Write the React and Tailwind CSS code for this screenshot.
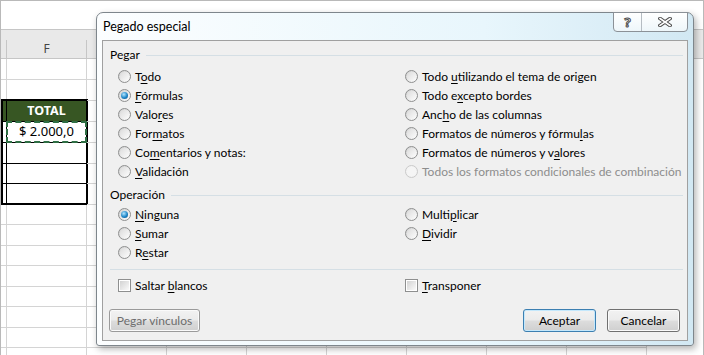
import React from "react";

const Ul = ({ children }) => (
  <span className="underline decoration-1 underline-offset-[2px]">{children}</span>
);

const Radio = ({ checked, disabled }) => (
  <span
    className={`flex h-[13px] w-[13px] shrink-0 items-center justify-center rounded-full border ${
      disabled
        ? "border-[#cacaca] bg-[#f3f3f3]"
        : "border-[#8e8f8f] bg-[linear-gradient(135deg,#cfcfcf,#ffffff)]"
    }`}
  >
    {checked ? (
      <span className="h-[7px] w-[7px] rounded-full bg-[radial-gradient(circle_at_40%_35%,#b4e6ff,#1d86c8_55%,#0a4780)]" />
    ) : (
      <span
        className={`h-[9px] w-[9px] rounded-full ${
          disabled ? "bg-[#f5f5f5]" : "bg-[linear-gradient(135deg,#dcdcdc,#fbfbfb)]"
        }`}
      />
    )}
  </span>
);

const Option = ({ children, checked, disabled }) => (
  <div className={`flex h-[19px] items-center gap-[4px] ${disabled ? "text-[#8d8d8d]" : "text-black"}`}>
    <Radio checked={checked} disabled={disabled} />
    <span className="whitespace-nowrap">{children}</span>
  </div>
);

const Check = ({ children }) => (
  <div className="flex h-[19px] items-center gap-[4px]">
    <span className="flex h-[13px] w-[13px] shrink-0 items-center justify-center border border-[#8e8f8f] bg-white">
      <span className="h-[9px] w-[9px] bg-[linear-gradient(135deg,#d2d2d2,#fafafa)]" />
    </span>
    <span className="whitespace-nowrap">{children}</span>
  </div>
);

const GroupLabel = ({ children }) => (
  <div className="flex h-[14px] items-center">
    <span>{children}</span>
    <span className="ml-[6px] h-px flex-1 bg-[#d5dfe5]" />
  </div>
);

const Btn = ({ children, primary, disabled, className }) => (
  <div
    className={`flex h-[23px] items-center justify-center rounded-[3px] border bg-[linear-gradient(#f2f2f2_0%,#ebebeb_48%,#dddddd_52%,#cfcfcf_100%)] ${
      primary
        ? "border-[#3c7fb1] shadow-[inset_0_0_0_1px_#c4e8fc]"
        : disabled
        ? "border-[#9a9a9a] shadow-[inset_0_0_0_1px_#fafafa] text-[#6d6d6d]"
        : "border-[#707070] shadow-[inset_0_0_0_1px_#fafafa]"
    } ${className}`}
  >
    {children}
  </div>
);

const rightCols = ["G", "H", "I", "J", "K", "L", "M"];
const gridRows = [21, 21, 21, 21, 21, 20, 21, 20, 21, 20, 21, 20, 21, 20, 21];
const lowerRows = [20, 21, 20, 21, 20, 21, 20, 21, 20];

const Sheet = () => (
  <div className="flex h-full w-full flex-col border-l border-t border-r border-[#b9b9b9] bg-white text-[#444] [font-family:'Noto_Sans',sans-serif]">
    <div className="h-[28px] shrink-0" />
    <div className="flex h-[30px] shrink-0 flex-col border-y border-[#c6c6c6] bg-[#e9e9e9]">
      <div className="h-[10px]" />
      <div className="flex flex-1">
        <div className="w-[6px] shrink-0 border-r border-[#c6c6c6]" />
        <div className="flex w-[80px] shrink-0 items-center justify-center border-r border-[#c6c6c6] text-[12px]">F</div>
        {rightCols.map((c) => (
          <div key={c} className="w-[80px] shrink-0 border-r border-[#c6c6c6]" />
        ))}
      </div>
    </div>
    <div className="flex">
      <div className="flex w-[86px] shrink-0 flex-col">
        <div className="flex h-[21px]">
          <div className="w-[6px] border-r border-b border-[#d4d4d4]" />
          <div className="w-[80px] border-r border-b border-[#d4d4d4]" />
        </div>
        <div className="flex h-[19px]">
          <div className="w-[6px] border-r border-[#d4d4d4]" />
          <div className="w-[80px] border-r border-[#d4d4d4]" />
        </div>
        <div className="w-[87px] border-2 border-black">
          <div className="flex h-[21px] border-b border-black bg-[#375623]">
            <div className="w-[4px] border-r border-black" />
            <div className="flex flex-1 items-center justify-center text-[12.5px] font-bold text-white">TOTAL</div>
          </div>
          <div className="flex h-[21px] border-b border-black">
            <div className="w-[4px] border-r border-black" />
            <div className="relative flex flex-1 items-center justify-center text-[13px] text-black">
              $ 2.000,0
              <span className="absolute -inset-[1px] border-2 border-dashed border-[#2f6f44]" />
            </div>
          </div>
          {[21, 20, 19].map((h, i) => (
            <div key={i} className={`flex ${i < 2 ? "border-b border-black" : ""}`} style={{ height: h }}>
              <div className="w-[4px] border-r border-black" />
              <div className="flex-1" />
            </div>
          ))}
        </div>
        {lowerRows.map((h, i) => (
          <div key={i} className="flex" style={{ height: h }}>
            <div className="w-[6px] border-r border-b border-[#d4d4d4]" />
            <div className="w-[80px] border-r border-b border-[#d4d4d4]" />
          </div>
        ))}
      </div>
      <div className="flex flex-col">
        {gridRows.map((h, i) => (
          <div key={i} className="flex" style={{ height: h }}>
            {rightCols.map((c) => (
              <div key={c} className="w-[80px] shrink-0 border-r border-b border-[#d4d4d4]" />
            ))}
          </div>
        ))}
      </div>
    </div>
  </div>
);

const Dialog = () => (
  <div className="absolute left-[96px] top-[12px] flex h-[334px] w-[598px] flex-col rounded-t-[7px] rounded-b-[3px] border border-[#7e868c] bg-[linear-gradient(to_right,#fcfeff,#e8f6fc_65%,#d2e8f3)] [font-family:Lato,sans-serif] shadow-[2px_3px_7px_rgba(0,0,0,0.3)]">
    <div className="relative flex h-[27px] shrink-0 items-center pl-[6px] pt-[1px] text-[12.5px] text-black">
      Pegado especial
      <div className="absolute -top-px right-[5px] flex h-[20px] w-[75px] rounded-b-[4px] border border-[#8b9197] bg-[linear-gradient(#ffffff,#eef6fa)]">
        <div className="flex w-[28px] items-center justify-center border-r border-[#b5bcc2] [font-family:'Noto_Sans',sans-serif] text-[13px] font-bold leading-none text-white [-webkit-text-stroke:1px_#4d4d4d]">
          ?
        </div>
        <div className="flex flex-1 items-center justify-center">
          <svg width="14" height="10" viewBox="0 0 14 10">
            <path d="M2 1.5 L12 8.5 M12 1.5 L2 8.5" stroke="#4d4d4d" strokeWidth="3.6" strokeLinecap="square" />
            <path d="M2 1.5 L12 8.5 M12 1.5 L2 8.5" stroke="#ffffff" strokeWidth="1.6" strokeLinecap="square" />
          </svg>
        </div>
      </div>
    </div>
    <div className="mx-[5px] mb-[4px] flex flex-1 flex-col border border-[#a0a0a0] bg-[#f0f0f0] pl-[7px] pr-[4px] pt-[7px] text-[12px] leading-[14px] text-black">
      <GroupLabel>Pegar</GroupLabel>
      <div className="mt-[5px] grid grid-cols-[287px_1fr] pl-[8px]">
        <div className="flex flex-col">
          <Option>T<Ul>o</Ul>do</Option>
          <Option checked><Ul>F</Ul>órmulas</Option>
          <Option>Valo<Ul>r</Ul>es</Option>
          <Option>For<Ul>m</Ul>atos</Option>
          <Option>Co<Ul>m</Ul>entarios y notas:</Option>
          <Option><Ul>V</Ul>alidación</Option>
        </div>
        <div className="flex flex-col">
          <Option>Todo <Ul>u</Ul>tilizando el tema de origen</Option>
          <Option>Todo e<Ul>x</Ul>cepto bordes</Option>
          <Option>Anc<Ul>h</Ul>o de las columnas</Option>
          <Option>Formatos de números y fórmu<Ul>l</Ul>as</Option>
          <Option>Formatos de números y v<Ul>a</Ul>lores</Option>
          <Option disabled>Todos los formatos condicionales de combinación</Option>
        </div>
      </div>
      <div className="mt-[7px]">
        <GroupLabel>Operación</GroupLabel>
      </div>
      <div className="mt-[3px] grid grid-cols-[287px_1fr] pl-[8px]">
        <div className="flex flex-col">
          <Option checked><Ul>N</Ul>inguna</Option>
          <Option><Ul>S</Ul>umar</Option>
          <Option>R<Ul>e</Ul>star</Option>
        </div>
        <div className="flex flex-col">
          <Option>Multi<Ul>p</Ul>licar</Option>
          <Option><Ul>D</Ul>ividir</Option>
        </div>
      </div>
      <div className="mt-[7px] h-px bg-[#d5dfe5]" />
      <div className="mt-[6px] grid grid-cols-[287px_1fr] pl-[8px]">
        <Check>Saltar <Ul>b</Ul>lancos</Check>
        <Check><Ul>T</Ul>ransponer</Check>
      </div>
      <div className="mt-[14px] flex items-center">
        <Btn disabled className="-ml-px w-[91px]">Pegar vínculos</Btn>
        <div className="flex-1" />
        <Btn primary className="w-[73px]">Aceptar</Btn>
        <Btn className="ml-[11px] mr-[3px] w-[73px]">Cancelar</Btn>
      </div>
    </div>
  </div>
);

export default function App() {
  return (
    <div className="relative h-[355px] w-[704px] overflow-hidden">
      <Sheet />
      <Dialog />
    </div>
  );
}
